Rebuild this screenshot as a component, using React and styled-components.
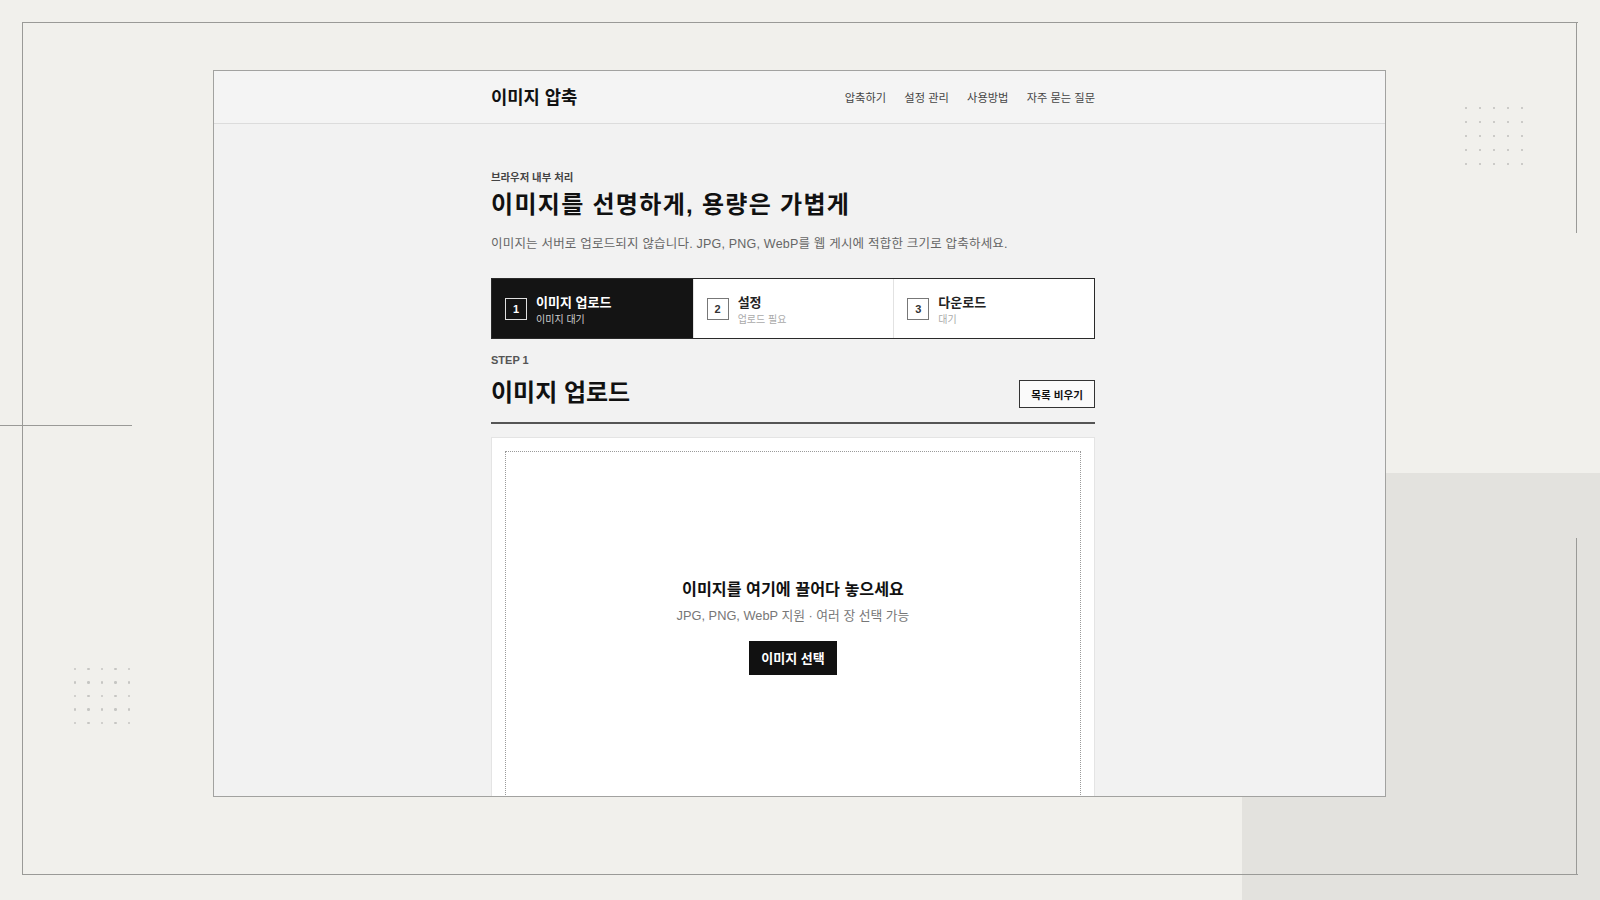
import React from 'react';
import styled, { createGlobalStyle } from 'styled-components';

const GlobalStyle = createGlobalStyle`
  html, body { margin: 0; padding: 0; background: #f1f0ec; }
  body {
    font-family: "Liberation Sans", "Noto Sans CJK KR", sans-serif;
    color: #111;
  }
  *, *::before, *::after { box-sizing: border-box; }
`;

const Stage = styled.div`
  position: relative;
  width: 1600px;
  height: 900px;
  overflow: hidden;
  background: #f1f0ec;
  padding: 70px 0 0 213px;
`;

const GrayBlock = styled.div`
  position: absolute;
  left: 1242px;
  top: 473px;
  right: 0;
  bottom: 0;
  background: #e3e2de;
`;

const Frame = styled.div`
  position: absolute;
  left: 22px;
  top: 22px;
  width: 1556px;
  height: 853px;
  border: 1px solid #9a9a97;
  border-right: none;
`;

const FrameSegment = styled.div`
  position: absolute;
  left: 1576px;
  width: 1px;
  top: ${(p) => p.$top}px;
  height: ${(p) => p.$height}px;
  background: #9a9a97;
`;

const SideTick = styled.div`
  position: absolute;
  left: 0;
  top: 425px;
  width: 132px;
  height: 1px;
  background: #9a9a97;
`;

const DotGrid = styled.div`
  position: absolute;
  left: ${(p) => p.$left}px;
  top: ${(p) => p.$top}px;
  display: grid;
  grid-template-columns: repeat(5, 2.4px);
  gap: ${(p) => p.$gap}px;
`;

const Dot = styled.span`
  width: 2.4px;
  height: 2.4px;
  border-radius: 50%;
  background: ${(p) => p.$color};
`;

const Panel = styled.div`
  position: relative;
  z-index: 1;
  width: 1173px;
  height: 727px;
  border: 1px solid #a2a2a0;
  background: #f2f2f2;
  overflow: hidden;
`;

const Container = styled.div`
  width: 604px;
  margin: 0 290px 0 277px;
`;

const Header = styled.header`
  height: 53px;
  background: #f4f4f4;
  border-bottom: 1px solid #dcdcdc;
`;

const HeaderInner = styled(Container)`
  height: 100%;
  display: flex;
  align-items: center;
  justify-content: space-between;
`;

const Logo = styled.div`
  font-size: 17.7px;
  font-weight: 700;
  color: #111;
  line-height: 24px;
  margin-top: 2px;
`;

const Nav = styled.nav`
  display: flex;
  gap: 18.2px;
  margin-top: 2px;
`;

const NavLink = styled.a`
  font-size: 11.25px;
  color: #444;
  line-height: 16px;
  text-decoration: none;
`;

const Main = styled(Container)`
  padding-top: 47px;
`;

const Eyebrow = styled.div`
  font-size: 10.4px;
  font-weight: 700;
  color: #444;
  line-height: 14px;
`;

const Title = styled.h1`
  margin: 4.5px 0 0;
  font-size: 24px;
  letter-spacing: 1.3px;
  line-height: 30px;
  font-weight: 700;
  color: #111;
`;

const Lead = styled.p`
  margin: 15.5px 0 0;
  font-size: 12.5px;
  letter-spacing: 0.2px;
  line-height: 18px;
  color: #666;
`;

const Steps = styled.div`
  margin-top: 25px;
  height: 61px;
  display: grid;
  grid-template-columns: repeat(3, 1fr);
  border: 1px solid #2a2a2a;
  background: #fff;
`;

const Step = styled.div`
  display: flex;
  align-items: center;
  gap: 9px;
  padding-left: 13px;
  background: ${(p) => (p.$active ? '#141414' : '#fff')};
  border-left: ${(p) => (p.$first ? 'none' : '1px solid #e2e2e2')};
`;

const StepNum = styled.div`
  width: 22px;
  height: 22px;
  display: flex;
  align-items: center;
  justify-content: center;
  border: 1px solid ${(p) => (p.$active ? '#e0e0e0' : '#777')};
  color: ${(p) => (p.$active ? '#fff' : '#333')};
  font-size: 11px;
  font-weight: 700;
`;

const StepText = styled.div`
  display: flex;
  flex-direction: column;
  gap: 2px;
  margin-top: 3px;
`;

const StepTitle = styled.div`
  font-size: 13px;
  font-weight: 700;
  line-height: 16px;
  color: ${(p) => (p.$active ? '#fff' : '#222')};
`;

const StepSub = styled.div`
  font-size: 10px;
  line-height: 13px;
  color: ${(p) => (p.$active ? '#cfcfcf' : '#aaa')};
`;

const StepLabel = styled.div`
  margin-top: 14px;
  font-size: 11px;
  font-weight: 700;
  line-height: 14px;
  color: #555;
`;

const SectionRow = styled.div`
  margin-top: 11px;
  display: flex;
  align-items: flex-end;
  justify-content: space-between;
  padding-bottom: 14px;
  border-bottom: 2px solid #555;
`;

const SectionTitle = styled.h2`
  margin: 0;
  font-size: 24px;
  line-height: 30px;
  font-weight: 700;
  color: #111;
`;

const OutlineButton = styled.button`
  height: 28px;
  padding: 0 11px;
  border: 1.5px solid #333;
  background: #fafafa;
  color: #111;
  font-family: inherit;
  font-size: 10.6px;
  font-weight: 700;
`;

const Card = styled.div`
  margin-top: 13px;
  padding: 13px;
  background: #fff;
  border: 1px solid #e4e4e4;
`;

const DropZone = styled.div`
  height: 350px;
  border: 1px dotted #9a9a9a;
  display: flex;
  flex-direction: column;
  align-items: center;
  justify-content: center;
`;

const DropTitle = styled.div`
  font-size: 16.2px;
  line-height: 22px;
  font-weight: 700;
  color: #111;
`;

const DropSub = styled.div`
  margin-top: 7.5px;
  font-size: 12.8px;
  line-height: 18px;
  color: #777;
`;

const PrimaryButton = styled.button`
  margin-top: 15.5px;
  height: 34px;
  padding: 0 12px;
  border: none;
  background: #111;
  color: #fff;
  font-family: inherit;
  font-size: 13px;
  font-weight: 700;
`;

const steps = [
  { n: 1, title: '이미지 업로드', sub: '이미지 대기', active: true },
  { n: 2, title: '설정', sub: '업로드 필요' },
  { n: 3, title: '다운로드', sub: '대기' },
];

const navItems = ['압축하기', '설정 관리', '사용방법', '자주 묻는 질문'];

function Dots({ left, top, gap, color }) {
  return (
    <DotGrid $left={left} $top={top} $gap={gap}>
      {Array.from({ length: 25 }).map((_, i) => (
        <Dot key={i} $color={color} />
      ))}
    </DotGrid>
  );
}

export default function App() {
  return (
    <>
      <GlobalStyle />
      <Stage>
        <GrayBlock />
        <Frame />
        <FrameSegment $top={22} $height={211} />
        <FrameSegment $top={538} $height={337} />
        <SideTick />
        <Dots left={1465} top={107} gap={11.6} color="#bfbfbc" />
        <Dots left={74} top={668} gap={11.1} color="#c6c6c3" />

        <Panel>
          <Header>
            <HeaderInner>
              <Logo>이미지 압축</Logo>
              <Nav>
                {navItems.map((item) => (
                  <NavLink key={item}>{item}</NavLink>
                ))}
              </Nav>
            </HeaderInner>
          </Header>

          <Main>
            <Eyebrow>브라우저 내부 처리</Eyebrow>
            <Title>이미지를 선명하게, 용량은 가볍게</Title>
            <Lead>
              이미지는 서버로 업로드되지 않습니다. JPG, PNG, WebP를 웹 게시에 적합한 크기로 압축하세요.
            </Lead>

            <Steps>
              {steps.map((s, i) => (
                <Step key={s.n} $active={s.active} $first={i === 0}>
                  <StepNum $active={s.active}>{s.n}</StepNum>
                  <StepText>
                    <StepTitle $active={s.active}>{s.title}</StepTitle>
                    <StepSub $active={s.active}>{s.sub}</StepSub>
                  </StepText>
                </Step>
              ))}
            </Steps>

            <StepLabel>STEP 1</StepLabel>
            <SectionRow>
              <SectionTitle>이미지 업로드</SectionTitle>
              <OutlineButton>목록 비우기</OutlineButton>
            </SectionRow>

            <Card>
              <DropZone>
                <DropTitle>이미지를 여기에 끌어다 놓으세요</DropTitle>
                <DropSub>JPG, PNG, WebP 지원 · 여러 장 선택 가능</DropSub>
                <PrimaryButton>이미지 선택</PrimaryButton>
              </DropZone>
            </Card>
          </Main>
        </Panel>
      </Stage>
    </>
  );
}
